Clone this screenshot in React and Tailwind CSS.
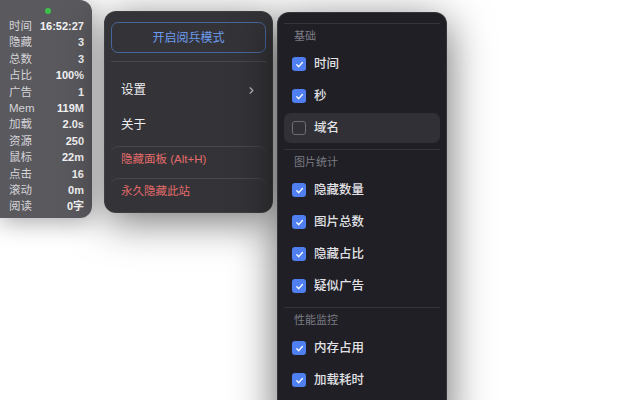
import React, { useState } from 'react';
import { ChevronRight } from 'lucide-react';

const FONT = { fontFamily: '"Liberation Sans", "Noto Sans CJK SC", sans-serif' };

const stats = [
    ['时间', '16:52:27'],
    ['隐藏', '3'],
    ['总数', '3'],
    ['占比', '100%'],
    ['广告', '1'],
    ['Mem', '119M'],
    ['加载', '2.0s'],
    ['资源', '250'],
    ['鼠标', '22m'],
    ['点击', '16'],
    ['滚动', '0m'],
    ['阅读', '0字'],
];

const sections = [
    {
        title: '基础',
        items: [
            { key: 'time', label: '时间', on: true },
            { key: 'sec', label: '秒', on: true },
            { key: 'host', label: '域名', on: false, hover: true },
        ],
    },
    {
        title: '图片统计',
        items: [
            { key: 'hidden', label: '隐藏数量', on: true },
            { key: 'total', label: '图片总数', on: true },
            { key: 'ratio', label: '隐藏占比', on: true },
            { key: 'ads', label: '疑似广告', on: true },
        ],
    },
    {
        title: '性能监控',
        items: [
            { key: 'mem', label: '内存占用', on: true },
            { key: 'load', label: '加载耗时', on: true },
        ],
    },
];

// Small square checkbox with a white tick
const Check = ({ on }) => (
    on ? (
        <span className="w-[14px] h-[14px] rounded-[3px] bg-[#4f7ff0] flex items-center justify-center shrink-0">
            <svg width="9" height="9" viewBox="0 0 10 10" fill="none">
                <path d="M2 5.3 L4.2 7.4 L8.2 2.8" stroke="white" strokeWidth="1.5" strokeLinecap="round" strokeLinejoin="round" />
            </svg>
        </span>
    ) : (
        <span className="w-[14px] h-[14px] rounded-[3px] border-[1.5px] border-[#6c6c74] shrink-0" />
    )
);

const App = () => {
    const [opts, setOpts] = useState(() => {
        const o = {};
        sections.forEach(s => s.items.forEach(i => { o[i.key] = i.on; }));
        return o;
    });

    const toggle = (key) => setOpts(prev => ({ ...prev, [key]: !prev[key] }));

    return (
        <div className="w-[640px] h-[400px] bg-white overflow-hidden flex items-start" style={FONT}>

            {/* Floating stats panel */}
            <div className="w-[92px] h-[218px] bg-[#5a595e] rounded-r-[12px] shadow-[0_4px_24px_rgba(0,0,0,0.35)] pt-[8px] pl-[9px] pr-[8px] flex flex-col">
                <div className="flex justify-center">
                    <span className="w-[6px] h-[6px] rounded-full bg-[#3ec14c] ml-[3px]" />
                </div>
                <div className="mt-[4px] text-[11.5px] leading-[16.4px]">
                    {stats.map(([label, value]) => (
                        <div key={label} className="flex justify-between">
                            <span className="text-[#d4d4d8]">{label}</span>
                            <span className="text-[#f4f4f5] font-semibold text-[11px]">{value}</span>
                        </div>
                    ))}
                </div>
            </div>

            {/* Main menu */}
            <div className="mt-[11px] ml-[12px] w-[169px] bg-[#343438] rounded-[12px] border border-white/5 shadow-[0_8px_40px_rgba(0,0,0,0.55)] pt-[10px] pb-[8px] px-[6px] flex flex-col">
                <button className="h-[31px] w-full rounded-[7px] border border-[#46679c] text-[#6d9cf0] text-[12px]">
                    开启阅兵模式
                </button>
                <div className="mt-[8px] border-t border-[#47474d]" />
                <div className="pt-[11px] pb-[3px]">
                    <div className="h-[35px] px-[10px] flex items-center justify-between text-[12.5px] text-[#ececf0]">
                        <span>设置</span>
                        <ChevronRight size={11} strokeWidth={2.5} className="text-[#b8b8be] mr-[-1px]" />
                    </div>
                    <div className="h-[35px] px-[10px] flex items-center text-[12.5px] text-[#ececf0]">
                        关于
                    </div>
                </div>
                <div className="border-t border-[#47474d] rounded-t-[8px]">
                    <div className="h-[25px] pt-[1px] px-[10px] flex items-center text-[11.5px] text-[#e26a6a]">
                        隐藏面板 (Alt+H)
                    </div>
                </div>
                <div className="mt-[6px] border-t border-[#47474d] rounded-t-[8px]">
                    <div className="h-[25px] pt-[1px] px-[10px] flex items-center text-[11.5px] text-[#e26a6a]">
                        永久隐藏此站
                    </div>
                </div>
            </div>

            {/* Settings submenu */}
            <div className="mt-[12px] ml-[4px] w-[170px] h-[420px] bg-[#1f1f25] rounded-[12px] border border-white/10 shadow-[0_10px_44px_rgba(0,0,0,0.6)] pt-[10px] flex flex-col">
                {sections.map(section => (
                    <div key={section.title} className="pb-[6px]">
                        <div className="mx-[6px] border-t border-[#34343a]" />
                        <div className="pt-[5px] pb-[6px] px-[16px] text-[11px] leading-[14px] text-[#7c7c84]">
                            {section.title}
                        </div>
                        <div className="flex flex-col gap-[2px]">
                            {section.items.map(item => (
                                <div
                                    key={item.key}
                                    onClick={() => toggle(item.key)}
                                    className={`mx-[6px] h-[30px] px-[8px] rounded-[7px] flex items-center gap-[8px] cursor-pointer ${item.hover ? 'bg-[#303036]' : ''}`}
                                >
                                    <Check on={opts[item.key]} />
                                    <span className="text-[12.5px] text-[#e2e2e6] font-medium">{item.label}</span>
                                </div>
                            ))}
                        </div>
                    </div>
                ))}
            </div>

        </div>
    );
};

export default App;
